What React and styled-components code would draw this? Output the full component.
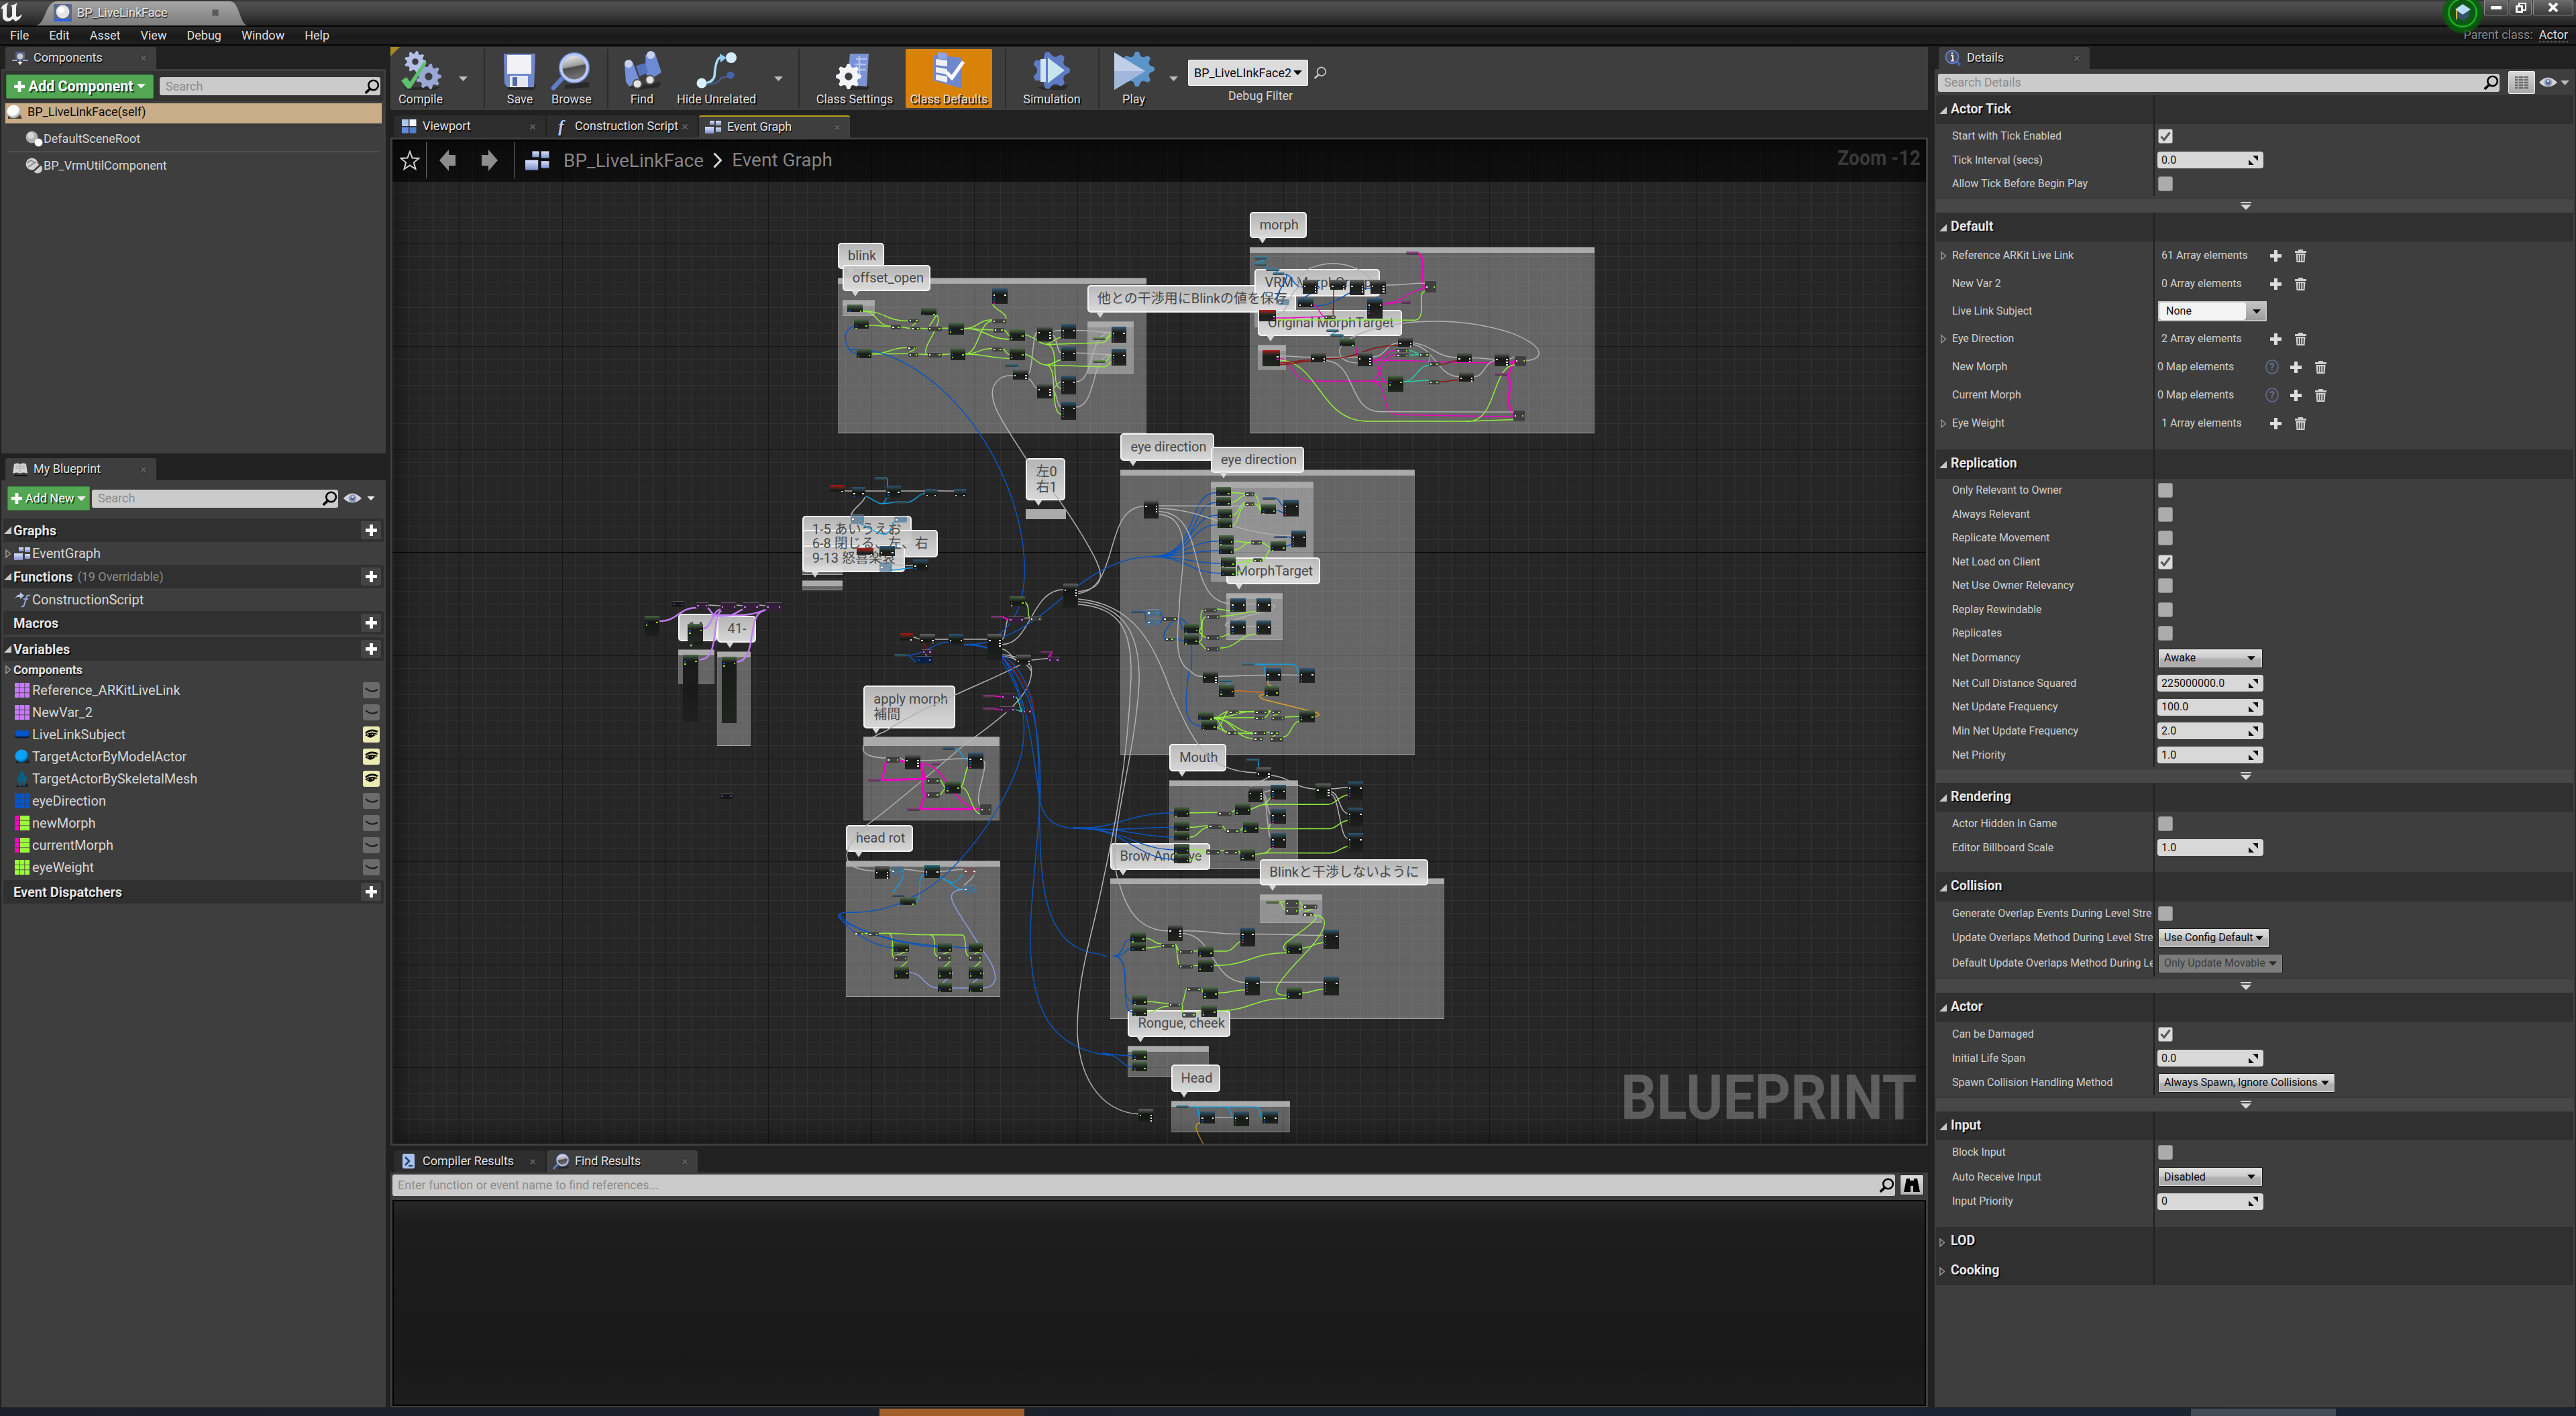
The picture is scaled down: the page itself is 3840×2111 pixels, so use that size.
import React from "react";
import styled, { createGlobalStyle, css } from "styled-components";

const Global = createGlobalStyle`
  * { box-sizing: border-box; }
  html, body { margin: 0; background: #212121; }
  body { font-family: Roboto, "Noto Sans CJK JP", sans-serif; font-size: 18px; line-height: 1; color: #dcdcdc; overflow: hidden; }
`;

/* ───────── window frame ───────── */
const Window = styled.div`
  width: 3840px; height: 2111px; display: flex; flex-direction: column; background: #212121;
`;
const TitleBar = styled.header`
  height: 38px; display: flex; align-items: flex-start;
  background: linear-gradient(#2e2e2e 0, #4f4f4f 3px, #464646 40%, #212121 100%);
`;
const LogoBox = styled.div`width: 35px; height: 38px; flex: none;`;
const DocTab = styled.div`position: relative; width: 334px; height: 38px; display: flex; align-items: center; padding: 0 29px 0 45px;`;
const DocTabShape = styled.svg`position: absolute; left: 0; top: 0; z-index: 0;`;
const DocTabText = styled.span`position: relative; margin-left: 8px; color: #e6e6e6; text-shadow: 1px 2px 1px #222; flex: 1;`;
const DocTabIcon = styled.span`position: relative; display: flex;`;
const TitleFill = styled.div`flex: 1;`;
const Grad = styled.div`
  width: 62px; height: 52px; margin: 0 1px 0 0; position: relative; z-index: 2; display: flex; justify-content: center; padding-top: 5px;
  background: radial-gradient(ellipse 31px 31px at 31px 19px, #0e5a14 0 62%, #15c41f 64% 67%, #0b610f 72%, rgba(8,90,12,.7) 96%, transparent 100%);
`;
const WinButtons = styled.div`display: flex; gap: 2px; padding-right: 4px;`;
const WinButton = styled.div`
  width: ${(p) => p.$w}px; height: 23px; display: flex; align-items: center; justify-content: center;
  background: linear-gradient(#6d6d6d, #3b3b3b); border: 1px solid #8a8a8a; border-top: 0; border-radius: 0 0 3px 3px;
`;
const MenuBar = styled.nav`
  height: 30px; display: flex; align-items: center; padding-left: 15px; gap: 30px;
  border-top: 2px solid #050505; border-bottom: 2px solid #050505;
  background: linear-gradient(#262626, #191919 60%, #202020); color: #dedede;
`;
const MenuItem = styled.span``;
const ParentClass = styled.div`margin-left: auto; padding-right: 12px; display: flex; gap: 9px; color: #8a8a8a; text-shadow: 1px 2px 0 #000;`;
const ParentLink = styled.span`color: #e2e2e2; border-bottom: 1px dotted #e2e2e2; padding-bottom: 1px;`;
const Body = styled.main`height: 2031px; display: flex; padding-top: 2px;`;
const TaskBar = styled.footer`height: 12px; display: flex; background: linear-gradient(90deg, #19202c, #1d2029 30%, #182532 70%, #1a2230);`;
const TaskChip = styled.div`height: 11px; margin-top: 1px; margin-left: ${(p) => p.$ml}px; width: ${(p) => p.$w}px; background: ${(p) => p.$c};`;

/* ───────── docking tabs and panels ───────── */
const Column = styled.section`width: ${(p) => p.$w}px; margin-left: ${(p) => p.$ml}px; display: flex; flex-direction: column; flex: none;`;
const TabStrip = styled.div`display: flex; height: 33px; margin: ${(p) => p.$mt || 0}px 0 0 6px; gap: 2px; flex: none;`;
const TabBox = styled.div`
  width: 225px; height: 33px; display: flex; align-items: center; padding-left: 9px; color: #e0e0e0; border-radius: 3px 3px 0 0;
  background: ${(p) => (p.$active ? "#3e3e3e" : "#2d2d2d")};
  ${(p) => p.$marked && css`border-top: 2px solid #b8a01c;`}
`;
const TabIcon = styled.span`width: 25px; display: flex; justify-content: center; flex: none;`;
const TabLabel = styled.span`margin-left: 8px; width: 156px; padding: 4px 0 5px; white-space: nowrap; overflow: hidden; text-shadow: 1px 2px 1px #000;`;
const TabClose = styled.span`display: flex; margin-left: auto; margin-right: 14px; position: relative;`;
const Panel = styled.div`
  background: #3e3e3e; height: ${(p) => p.$h}px; display: flex; flex-direction: column; flex: none;
`;

const Cross = ({ c = "#5e5e5e" }) => (
  <TabClose><svg width="10" height="10" viewBox="0 0 10 10"><rect width="10" height="10" rx="2" fill="#222" opacity=".35" /><path d="M1.500 1.500L8.500 8.500M8.500 1.500L1.500 8.500" stroke={c} strokeWidth="2.200" /></svg></TabClose>
);
const Tab = ({ icon, label, active = true, marked }) => (
  <TabBox $active={active} $marked={marked}>
    <TabIcon>{icon}</TabIcon>
    <TabLabel>{label}</TabLabel>
    <Cross />
  </TabBox>
);

const SearchBox = styled.div`
  height: ${(p) => p.$h || 27}px; background: #cbcbcb; border-radius: 3px; display: flex; align-items: center; justify-content: space-between;
  padding: 0 1px 0 9px; color: #8b8b8b; flex: 1;
`;
const GreenButton = styled.div`
  width: ${(p) => p.$w}px; height: 36px; display: flex; align-items: center; justify-content: center; gap: 5px; color: #fff;
  font-weight: ${(p) => (p.$bold ? 700 : 400)}; font-size: ${(p) => (p.$bold ? 21.5 : 18)}px; white-space: nowrap;
  background: #53a653; border: 1px solid #3f8b3f; border-radius: 2px; text-shadow: 2px 2px 0 #1d3f1d;
`;

/* ───────── icons ───────── */
const Mag = ({ s = 22, c = "#000", w = 2.6 }) => (
  <svg width={s} height={s} viewBox="0 0 22 22">
    <circle cx="12.6" cy="9" r="7.3" fill="none" stroke={c} strokeWidth={w} />
    <path d="M7.6 14.4L1.8 19.8" stroke={c} strokeWidth={w + 1.2} strokeLinecap="round" />
  </svg>
);
const Caret = ({ c = "#eee", w = 13, h = 7 }) => (
  <svg width={w} height={h} viewBox="0 0 13 7"><path d="M0 0H13L6.5 7Z" fill={c} /></svg>
);
const Plus = ({ s = 17, c = "#fff" }) => (
  <svg width={s} height={s} viewBox="0 0 17 17"><path d="M6 0H11V6H17V11H11V17H6V11H0V6H6Z" fill={c} /></svg>
);
const Sphere = ({ s = 24, id = "sp", from = "#fff", to = "#8d8d8d" }) => (
  <svg width={s} height={s} viewBox="0 0 24 24">
    <defs><radialGradient id={id} cx="40%" cy="32%" r="70%"><stop offset="0" stopColor={from} /><stop offset=".6" stopColor={from} /><stop offset="1" stopColor={to} /></radialGradient></defs>
    <path d="M3 18L21 16L24 22H3Z" fill="#151515" opacity=".7" />
    <circle cx="11.5" cy="11.5" r="10" fill={`url(#${id})`} />
  </svg>
);
const SceneRootIcon = () => (
  <svg width="26" height="24" viewBox="0 0 26 24"><circle cx="9.5" cy="9.5" r="9" fill="#b0b0b0" /><circle cx="8" cy="7" r="5" fill="#d6d6d6" /><circle cx="19.500" cy="17.500" r="6" fill="#fff" /></svg>
);
const VrmIcon = () => (
  <svg width="26" height="24" viewBox="0 0 26 24"><circle cx="9.500" cy="9.500" r="9" fill="#d2d2d2" /><path d="M2 8L8 4L14 8M4 14L16 6" stroke="#8a8a8a" strokeWidth="2" fill="none" /><circle cx="18" cy="16.500" r="7" fill="#cfcfcf" /><path d="M11 21L24 9" stroke="#3e3e3e" strokeWidth="2.500" /></svg>
);
const ComponentsIcon = () => (
  <svg width="24" height="22" viewBox="0 0 24 22"><rect x="5" y="1" width="14" height="13" rx="2" fill="#55648a" /><circle cx="12" cy="8" r="4.500" fill="#c9c9c9" /><path d="M0 14H8M16 14H24M12 14V20" stroke="#9aa6c4" strokeWidth="2" /><path d="M8 16H16L12 21Z" fill="#e8e8e8" /></svg>
);
const BookIcon = () => (
  <svg width="24" height="22" viewBox="0 0 24 22"><path d="M2 19H23L22 21H4Z" fill="#141414" /><path d="M1 17L3 3Q8 0 12 3Q17 0 21 3L23 17Q17 14 12 17Q7 14 1 17Z" fill="#d4d4d4" /><path d="M12 3V17M5 6H10M5 9H10M14 6H19M14 9H19" stroke="#9a9a9a" /></svg>
);
const GraphIcon = ({ w = 25, h = 21 }) => (
  <svg width={w} height={h} viewBox="0 0 25 21"><defs><linearGradient id="gi" x2="0" y2="1"><stop offset="0" stopColor="#dce4ff" /><stop offset="1" stopColor="#7e8fc8" /></linearGradient></defs>
    <rect x="7" y="1" width="7" height="6" fill="url(#gi)" /><rect x="16" y="1" width="8" height="7" fill="url(#gi)" /><rect x="0" y="10" width="13" height="10" fill="url(#gi)" /><rect x="16" y="11" width="8" height="7" fill="url(#gi)" /></svg>
);
const ViewportIcon = () => (
  <svg width="22" height="22" viewBox="0 0 22 22"><rect x="0" y="0" width="10" height="10" fill="#a9c7ee" /><rect x="11.500" y="0" width="10" height="10" fill="#f1f7ff" /><rect x="0" y="11.500" width="10" height="9" fill="#5f8edb" /><rect x="11.500" y="11.500" width="10" height="9" fill="#4f7fd0" /></svg>
);
const ScriptF = styled.span`font: italic bold ${(p) => p.$s || 25}px "Liberation Serif", serif; line-height: 22px; color: #b9c6f2; text-shadow: 1px 2px 1px #111;`;
const FnIcon = () => (
  <svg width="25" height="23" viewBox="0 0 25 23"><path d="M1 9Q5 3 9 3V0L15 5L9 10V7Q5 6 1 9Z" fill="#b4c2e8" /><path d="M24 5Q19 3 18 9L15 19Q14 22 11 21M14 10H21" fill="none" stroke="#93a3d2" strokeWidth="2.200" /></svg>
);
const InfoIcon = () => (
  <svg width="25" height="25" viewBox="0 0 25 25"><path d="M17 17L23 23" stroke="#3f66b8" strokeWidth="4" /><circle cx="11" cy="11" r="9.500" fill="#4a4f5c" stroke="#5f80c8" strokeWidth="2" /><path d="M9 9H12V16M9 16.500H14" stroke="#e6e6e6" strokeWidth="2" fill="none" /><circle cx="11" cy="5.800" r="1.500" fill="#e6e6e6" /></svg>
);
const CompilerIcon = () => (
  <svg width="22" height="24" viewBox="0 0 22 24"><rect x="1" y="0" width="18" height="22" rx="2" fill="#a9c3ef" /><path d="M5 5L11 11L5 17M10 18H16" stroke="#23406f" strokeWidth="2.500" fill="none" /></svg>
);
const GlassIcon = ({ s = 25 }) => (
  <svg width={s} height={s} viewBox="0 0 60 60"><defs><linearGradient id="gl" x1="0" y1="0" x2=".2" y2="1"><stop offset="0" stopColor="#fff" /><stop offset=".5" stopColor="#9d9d9d" /><stop offset=".56" stopColor="#4c4c4c" /><stop offset="1" stopColor="#777" /></linearGradient></defs>
    <path d="M22 50L56 46L58 54L20 57Z" fill="#1c1c1c" opacity=".6" /><path d="M16 42L4 55" stroke="#5f7cc4" strokeWidth="7" strokeLinecap="round" /><circle cx="35" cy="25" r="20" fill="url(#gl)" stroke="#b8c8f4" strokeWidth="5" /><circle cx="35" cy="25" r="22.500" fill="none" stroke="#5b76bd" strokeWidth="1.500" /></svg>
);
const Eye = () => (
  <svg width="27" height="16" viewBox="0 0 27 16"><path d="M0 8Q13 -7 27 8Q13 21 0 8Z" fill="#d3d5da" /><circle cx="13.500" cy="8" r="6" fill="#8f9cbd" /><circle cx="13.500" cy="8" r="3" fill="#4d5f8c" /><circle cx="13.500" cy="6" r="1.500" fill="#e4e8f2" /></svg>
);
const Trash = () => (
  <svg width="17" height="19" viewBox="0 0 17 19"><path d="M0 2H5V0H12V2H17V5H0Z" fill="#cfcfcf" /><path d="M1.500 6H15.500L14.500 19H2.500Z" fill="#cfcfcf" /><path d="M5 8V17M8.500 8V17M12 8V17" stroke="#3e3e3e" strokeWidth="1.400" /></svg>
);
const Open = ({ s = 11 }) => <svg width={s} height={s} viewBox="0 0 11 11"><path d="M11 0V11H0Z" fill="#c8c8c8" /></svg>;
const Closed = () => <svg width="9" height="13" viewBox="0 0 9 13"><path d="M1 1L7.500 6.500L1 12Z" fill="none" stroke="#a0a0a0" strokeWidth="1.300" /></svg>;

const gearPath = (cx, cy, r, n) => {
  let d = "";
  for (let i = 0; i < n * 4; i++) {
    const a = ((i - 0.5) / (n * 4)) * Math.PI * 2;
    const q = i % 4 < 2 ? r : r * 0.76;
    d += `${i ? "L" : "M"}${(cx + q * Math.cos(a)).toFixed(1)} ${(cy + q * Math.sin(a)).toFixed(1)}`;
  }
  return d + "Z";
};
const Gear = ({ cx, cy, r, n = 8, fill, hole = "#3e3e3e" }) => (
  <g><path d={gearPath(cx, cy, r, n)} fill={fill} /><circle cx={cx} cy={cy} r={r * 0.3} fill={hole} /></g>
);
const BigIcon = ({ kind }) => (
  <svg width="62" height="60" viewBox="0 0 62 60">
    {kind === "compile" && <><path d="M6 54H60L52 58H10Z" fill="#1d1d1d" opacity=".6" /><Gear cx={23} cy={16} r={16} n={9} fill="#b4c0e6" /><Gear cx={43} cy={38} r={19} n={9} fill="#9aa8d6" /><path d="M2 44L10 39L15 46L36 16L40 18L16 56H11Z" fill="#5cc06c" /></>}
    {kind === "save" && <><path d="M10 52L56 50L52 58H14Z" fill="#1d1d1d" opacity=".6" /><path d="M7 4H54L52 54H12L8 48Z" fill="#7089cf" /><rect x="12" y="6" width="36" height="28" fill="#f2f2f6" /><rect x="16" y="37" width="27" height="17" fill="#e6e8f0" /><rect x="20" y="39" width="7" height="13" fill="#5068ae" /></>}
    {kind === "browse" && <GlassIcon s={60} />}
    {kind === "find" && <><path d="M12 54L60 46L56 54L24 58Z" fill="#1d1d1d" opacity=".6" /><path d="M5 20L17 16L28 46L12 53L7 46Z" fill="#7591da" /><path d="M36 6L50 2L60 32L44 42L37 34Z" fill="#6d8ad4" /><path d="M22 22L36 18L40 32L27 38Z" fill="#5672bd" /><circle cx="11" cy="19" r="6" fill="#c6d1ee" /><circle cx="44" cy="6" r="6" fill="#c6d1ee" /><circle cx="24" cy="49" r="6.500" fill="#e2e2e2" stroke="#555" strokeWidth="2" /><circle cx="43" cy="43" r="6.500" fill="#e2e2e2" stroke="#555" strokeWidth="2" /></>}
    {kind === "hide" && <><path d="M8 50Q26 52 30 40Q32 8 42 12" fill="none" stroke="#a8dcf6" strokeWidth="3.500" transform="translate(-2 -2)" /><path d="M36 4L46 10L37 17Z" fill="#8fd2f5" /><path d="M12 50Q34 50 38 40L48 38" fill="none" stroke="#46597f" strokeWidth="3" /><circle cx="9" cy="48" r="7.500" fill="#d9f0fd" /><circle cx="53" cy="10" r="8" fill="#d4edfb" /><circle cx="52" cy="36" r="5.500" fill="#4564a8" /></>}
    {kind === "settings" && <><path d="M20 54L54 52L50 58H24Z" fill="#1d1d1d" opacity=".6" /><path d="M24 4L52 4L49 53L20 50Z" fill="#7b93d6" /><path d="M33 12H49M32 20H48M32 28H48M38 8V38" stroke="#b4c4f0" strokeWidth="2.500" /><Gear cx={22} cy={38} r={19} n={8} fill="#f4f4f8" /></>}
    {kind === "defaults" && <><path d="M8 6L50 10L50 56L8 44Z" fill="#7088cb" /><path d="M14 2L28 3L27 12H14Z" fill="#8ea4de" /><path d="M11 12L28 14V23L11 21ZM11 24L28 27V35L11 32ZM11 35L28 38V47L11 43Z" fill="#eef0f6" /><path d="M27 32L35 40L52 16" fill="none" stroke="#fff" strokeWidth="5.500" /></>}
    {kind === "sim" && <><path d="M10 54L56 50L50 58H18Z" fill="#1d1d1d" opacity=".6" /><Gear cx={30} cy={29} r={28} n={7} fill="#5e7cc6" hole="#5e7cc6" /><rect x="14" y="12" width="8" height="34" fill="#cfe4ee" /><path d="M25 10L50 29L25 48Z" fill="#c8e4ec" /></>}
    {kind === "play" && <><Gear cx={36} cy={27} r={26} n={8} fill="#5c93c8" hole="#5c93c8" /><path d="M2 2L48 30L2 58Z" fill="#c0cee8" /><path d="M2 30L48 30L2 58Z" fill="#a2b6dc" /></>}
  </svg>
);

/* ───────── components panel ───────── */
const CompToolbar = styled.div`
  margin: 3px 3px 0; height: 45px; background: #323232; border-radius: 4px; display: flex; align-items: center; gap: 9px; padding: 0 5px 0 4px;
`;
const SelfRow = styled.div`margin: 3px 6px 0; height: 30px; background: #c9ad88; color: #0b0b0b; display: flex; align-items: center; gap: 8px; padding: 0 0 4px 1px;`;
const TreeRow = styled.div`
  margin: ${(p) => (p.$faint ? 2 : 0)}px 8px 0; height: 40px; padding-left: 28px; display: flex; align-items: center; gap: 1px;
  border-top: 1px solid ${(p) => (p.$faint ? "#262626" : "#6a6a6a")}; color: #d6d6d6;
`;

/* ───────── my blueprint panel ───────── */
const BpToolbar = styled.div`height: 54px; display: flex; align-items: center; padding: 0 16px 0 9px; gap: 3px; flex: none; margin-bottom: 3px; & > svg { margin-left: 5px; }`;
const SectionHead = styled.div`
  margin: ${(p) => p.$mt || 0}px 3px 0; height: 35px; flex: none; background: #303030; border-radius: 3px 3px 0 0; display: flex; align-items: center; padding: 0 4px 0 1px;
  color: #e4e4e4; font-weight: 700; font-size: 20px; text-shadow: 2px 2px 0 #0a0a0a;
`;
const Twist = styled.span`width: 13px; display: flex; justify-content: ${(p) => (p.$c ? "center" : "flex-start")}; flex: none; margin-right: 1px;`;
const SectionNote = styled.span`margin-left: 7px; font-weight: 400; font-size: 18px; color: #8d8d8d; text-shadow: none;`;
const AddButton = styled.span`margin-left: auto; width: 30px; height: 27px; background: #444; border-radius: 2px; display: flex; align-items: center; justify-content: center;`;
const ItemRow = styled.div`
  height: ${(p) => p.$h || 33}px; flex: none; display: flex; align-items: center; padding: 0 9px 0 4px; font-size: 20px; color: #d6d6d6;
  ${(p) => p.$bold && css`font-weight: 700; font-size: 18px; color: #e2e2e2; text-shadow: 1px 2px 0 #111;`}
`;
const ItemIcon = styled.span`width: 26px; margin-right: 2px; display: flex; justify-content: center; flex: none;`;
const ItemEye = styled.span`
  margin-left: auto; width: 25px; height: 24px; border-radius: 3px; background: ${(p) => (p.$on ? "#ecebb2" : "#6b6b6b")};
  display: flex; align-items: center; justify-content: center;
`;

const ArrayIcon = ({ c }) => (
  <svg width="22" height="22" viewBox="0 0 22 22">{[0, 1, 2].map((i) => [0, 1, 2].map((j) => <rect key={`${i}${j}`} x={i * 7.6} y={j * 7.6} width="6.800" height="6.800" fill={c} />))}</svg>
);
const MapIcon = () => (
  <svg width="22" height="22" viewBox="0 0 22 22">{[0, 1, 2].map((j) => <g key={j}><rect x="0" y={j * 7.6} width="6.800" height="6.800" fill="#ff00c8" /><rect x="8" y={j * 7.6} width="14" height="6.800" fill="#9cff3c" /></g>)}</svg>
);
const PillIcon = () => <svg width="22" height="12" viewBox="0 0 22 12"><rect y="2" width="22" height="9.500" rx="4.500" fill="#0a1a36" /><rect width="22" height="9" rx="4.500" fill="#0556cc" /></svg>;
const BodyIcon = () => <svg width="18" height="24" viewBox="0 0 18 24"><path d="M0 22L18 19V24H0Z" fill="#111" opacity=".6" /><path d="M6 1H12V6L16 8L15 17H13V23H10V15H8V23H5V17H2L3 8L6 6Z" fill="#0b5f80" /></svg>;

const VARIABLES = [
  ["Reference_ARKitLiveLink", <ArrayIcon c="#c67bf7" />, 0],
  ["NewVar_2", <ArrayIcon c="#c67bf7" />, 0],
  ["LiveLinkSubject", <PillIcon />, 1],
  ["TargetActorByModelActor", <Sphere id="spb" from="#0aa2f4" to="#04395c" />, 1],
  ["TargetActorBySkeletalMesh", <BodyIcon />, 1],
  ["eyeDirection", <ArrayIcon c="#0556cc" />, 0],
  ["newMorph", <MapIcon />, 0],
  ["currentMorph", <MapIcon />, 0],
  ["eyeWeight", <ArrayIcon c="#9cff3c" />, 0],
];

const Section = ({ title, note, open, mt }) => (
  <SectionHead $mt={mt}>
    <Twist>{open && <Open />}</Twist>{title}{note && <SectionNote>{note}</SectionNote>}
    <AddButton><Plus /></AddButton>
  </SectionHead>
);

const LeftColumn = () => (
  <Column $w={573} $ml={2}>
    <TabStrip><Tab icon={<ComponentsIcon />} label="Components" /></TabStrip>
    <Panel $h={573}>
      <CompToolbar>
        <GreenButton $w={220} $bold><Plus s={16} />Add Component<Caret /></GreenButton>
        <SearchBox>Search<Mag /></SearchBox>
      </CompToolbar>
      <SelfRow><Sphere id="spa" />BP_LiveLinkFace(self)</SelfRow>
      <TreeRow $faint><SceneRootIcon />DefaultSceneRoot</TreeRow>
      <TreeRow><VrmIcon />BP_VrmUtilComponent</TreeRow>
    </Panel>
    <TabStrip $mt={7}><Tab icon={<BookIcon />} label="My Blueprint" /></TabStrip>
    <Panel $h={1382}>
      <BpToolbar>
        <GreenButton $w={123}><Plus s={16} />Add New<Caret /></GreenButton>
        <SearchBox>Search<Mag /></SearchBox>
        <Eye /><Caret w={12} h={6} />
      </BpToolbar>
      <Section title="Graphs" open />
      <ItemRow $h={34}><Twist $c><Closed /></Twist><ItemIcon><GraphIcon /></ItemIcon>EventGraph</ItemRow>
      <Section title="Functions" note="(19 Overridable)" open />
      <ItemRow $h={34}><Twist /><ItemIcon><FnIcon /></ItemIcon>ConstructionScript</ItemRow>
      <Section title="Macros" />
      <Section title="Variables" open mt={4} />
      <ItemRow $h={27} $bold><Twist $c><Closed /></Twist>Components</ItemRow>
      {VARIABLES.map(([name, icon, on]) => (
        <ItemRow key={name}>
          <Twist /><ItemIcon>{icon}</ItemIcon>{name}
          <ItemEye $on={on}>
            {on ? <svg width="22" height="16" viewBox="0 0 22 16"><path d="M2 6Q10 -1 20 4" fill="none" stroke="#0d0d08" strokeWidth="2.600" /><path d="M1 9Q10 2 20 7Q17 9 15 10Q9 15 5 11Q3 10 1 9Z" fill="#0d0d08" /><path d="M4 9L7 8.500M15 8.500L18 8M16 12L20 10" stroke="#ecebb2" strokeWidth="1.200" /><circle cx="12" cy="8" r="1" fill="#ecebb2" /></svg>
              : <svg width="22" height="10" viewBox="0 0 22 10"><path d="M2 2Q11 10 20 4" fill="none" stroke="#1d1d1d" strokeWidth="2.200" /></svg>}
          </ItemEye>
        </ItemRow>
      ))}
      <Section title="Event Dispatchers" mt={3} />
    </Panel>
  </Column>
);

/* ───────── toolbar ───────── */
const Toolbar = styled.div`height: 94px; background: #3e3e3e; display: flex; flex: none; position: relative; border-radius: 2px;`;
const Corner = styled.svg`position: absolute; left: 0; top: 0;`;
const Tool = styled.div`
  width: ${(p) => p.$w}px; margin: 3px 0 3px ${(p) => p.$ml || 0}px; height: 88px; display: flex; flex-direction: column; align-items: center; padding-top: 3px; border-radius: 2px;
  background: ${(p) => (p.$on ? "#d9820a" : "none")}; white-space: nowrap; text-shadow: 2px 2px 1px #0a0a0a; color: #dedede;
`;
const ToolLabel = styled.span`margin-top: 3px;`;
const ToolArrow = styled.div`width: 36px; margin-left: ${(p) => p.$ml || 0}px; display: flex; justify-content: center; padding-top: 44px;`;
const ToolSep = styled.div`width: 2px; margin: 3px 0 3px ${(p) => p.$ml}px; background: #2a2a2a;`;
const DebugCol = styled.div`margin-left: 4px; padding-top: 19px; display: flex; flex-direction: column;`;
const DebugRow = styled.div`display: flex; align-items: center; gap: 9px;`;
const DebugCombo = styled.div`width: 179px; height: 39px; background: #dcdcdc; border: 1px solid #f4f4f4; color: #0a0a0a; display: flex; align-items: center; justify-content: center; gap: 3px; border-radius: 2px;`;
const DebugLabel = styled.span`margin: 6px 0 0 60px; color: #d6d6d6;`;

const MainToolbar = () => (
  <Toolbar>
    <Corner width="14" height="14"><path d="M0 0H14L0 14Z" fill="#a88b1f" /></Corner>
    <Tool $w={90}><BigIcon kind="compile" /><ToolLabel>Compile</ToolLabel></Tool>
    <ToolArrow><Caret c="#bdbdbd" /></ToolArrow>
    <ToolSep $ml={13} />
    <Tool $w={78} $ml={13}><BigIcon kind="save" /><ToolLabel>Save</ToolLabel></Tool>
    <Tool $w={76}><BigIcon kind="browse" /><ToolLabel>Browse</ToolLabel></Tool>
    <ToolSep $ml={15} />
    <Tool $w={78} $ml={11}><BigIcon kind="find" /><ToolLabel>Find</ToolLabel></Tool>
    <Tool $w={144}><BigIcon kind="hide" /><ToolLabel>Hide Unrelated</ToolLabel></Tool>
    <ToolArrow $ml={2}><Caret c="#bdbdbd" /></ToolArrow>
    <ToolSep $ml={12} />
    <Tool $w={144} $ml={10}><BigIcon kind="settings" /><ToolLabel>Class Settings</ToolLabel></Tool>
    <Tool $w={129} $ml={4} $on><BigIcon kind="defaults" /><ToolLabel>Class Defaults</ToolLabel></Tool>
    <ToolSep $ml={19} />
    <Tool $w={110} $ml={13}><BigIcon kind="sim" /><ToolLabel>Simulation</ToolLabel></Tool>
    <ToolSep $ml={14} />
    <Tool $w={76} $ml={13}><BigIcon kind="play" /><ToolLabel>Play</ToolLabel></Tool>
    <ToolArrow $ml={3}><Caret c="#bdbdbd" /></ToolArrow>
    <DebugCol>
      <DebugRow><DebugCombo>BP_LiveLInkFace2<Caret c="#000" /></DebugCombo><Mag s={19} c="#c4c4c4" w={2} /></DebugRow>
      <DebugLabel>Debug Filter</DebugLabel>
    </DebugCol>
  </Toolbar>
);

/* ───────── graph canvas ───────── */
const OX = 585, OY = 208, GW = 2286, GH = 1497;
/* Each cluster of the graph has its own origin and unit size. */
const A = [1200, 300, 0.38265, 0.44643];
const B = [1600, 300, 0.5102, 0.44643];
const C = [940, 700, 0.44643, 0.5102];
const D = [1600, 1000, 0.39541, 0.45918];
const Z = [0, 0, 1, 1];
const px = (r, x) => r[0] + x * r[2] - OX;
const py = (r, y) => r[1] + y * r[3] - OY;
const rect = (r, [x, y, w, h]) => ({ left: px(r, x), top: py(r, y), width: w * r[2], height: h * r[3] });

const GraphFrame = styled.div`height: 1503px; padding: 3px; background: #3e3e3e; flex: none;`;
const Canvas = styled.div`position: relative; width: ${GW}px; height: ${GH}px; overflow: hidden; background: #262626;`;
const Layer = styled.svg`position: absolute; left: 0; top: 0;`;
const Vignette = styled.div`position: absolute; inset: 0; box-shadow: inset 0 0 40px 6px rgba(0,0,0,.5); border-top: 2px solid #000;`;
const Comment = styled.div`
  position: absolute; border: 1px solid rgba(150,150,150,.25);
  background: linear-gradient(#aaa ${(p) => p.$head || 8}px, rgba(255,255,255,.29) ${(p) => p.$head || 8}px);
`;
const Bubble = styled.div`
  position: absolute; border: 2px solid #f4f4f4; border-radius: 5px; background: linear-gradient(rgba(190,190,190,.94), rgba(226,226,226,.94));
  &::after { content: ""; position: absolute; left: 11px; bottom: -10px; border: 6px solid transparent; border-bottom: 0; border-top: 9px solid #d8d8d8; }
`;
const BubbleText = styled.div`
  position: absolute; padding: 0 0 0 15px; display: flex; flex-direction: column; justify-content: center; font-size: 20px; line-height: 23px; white-space: nowrap; color: #484848;
`;
const HEADS = { g: "#4b6b45", b: "#2f5a7a", k: "#6b6b6b", r: "#b31616", t: "#0c6a70" };
const NodeBox = styled.div`
  position: absolute; display: flex; justify-content: space-between; padding: 9px 2px 1px; overflow: hidden;
  background: linear-gradient(${(p) => HEADS[p.$k]} 0, #1c221c 7px, #141614 9px, #1d201d 100%); opacity: .95;
`;
const SMALL = { s: "rgba(58,58,58,.88)", q: "rgba(70,110,140,.62)", n: "rgba(10,30,70,.95)", x: "rgba(120,80,80,.6)", m: "rgba(52,30,56,.92)", e: "rgba(24,22,26,.95)" };
const SmallBox = styled.div`
  position: absolute; border-radius: 2px; border-top: 1px solid rgba(180,180,180,.4);
  background: ${(p) => SMALL[p.$k]};
  display: flex; justify-content: space-between; align-items: center; padding: 0 2px;
`;
const PillBox = styled.div`position: absolute; border-radius: 2px; background: linear-gradient(${(p) => p.$c}, #333); opacity: .9;`;
const PinCol = styled.span`display: flex; flex-direction: column; gap: 2px;`;
const Pin = styled.i`width: 2.5px; height: 2px; flex: none; background: ${(p) => p.$c};`;

const COL = { w: "#b2b2b2", u: "#0a55c0", c: "#139fe0", l: "#92ef3c", m: "#f400c4", p: "#c07cf4", v: "#8f9ce2", d: "#8e1010", o: "#e2701c", y: "#dba52a", t: "#25cfa5", W: "#fff", h: "#3a5f6f", e: "#5d4570" };
const PINS = { g: ["ul", "l"], b: ["Wuhm", "W"], k: ["W", "WWW"], r: ["", "Wm"], t: ["Wc", "W"], s: ["W", "l"], q: ["W", "c"], n: ["u", "p"], x: ["W", "W"], m: ["p", "p"], e: ["e", "e"] };

/* kind letter → list of boxes, for every cluster */
const NODES = [
  [A, "g", [[165,346,60,24],[191,395,56,31],[452,357,59,24],[559,405,60,40],[201,492,59,32],[567,491,57,39],[797,427,59,38],[797,491,59,39],[797,1319,59,33]]],
  [A, "s", [[402,391,41,14],[335,411,38,16],[411,416,38,15],[478,417,54,17],[398,481,37,15],[402,503,40,16],[478,503,54,18],[729,391,54,16],[734,422,41,16],[729,487,41,15],[875,1385,48,18]]],
  [A, "b", [[729,291,60,51],[998,410,59,49],[998,486,59,48],[998,583,59,63],[998,669,59,62],[1194,418,57,54],[1194,492,57,56],[183,955,51,33],[317,950,56,39],[467,960,49,19],[579,960,49,19],[290,1151,60,34],[421,1196,60,39],[559,1445,59,38]]],
  [A, "k", [[904,417,60,52],[810,561,59,35],[904,606,60,52],[1006,1277,58,82],[447,1445,60,32],[711,1445,57,88],[823,1514,59,34]]],
  [A, "r", [[97,948,56,23],[201,1157,66,21],[371,1443,51,25]]],
  [A, "q", [[178,1046,51,31],[348,1053,48,19],[291,1204,50,34]]],
  [A, "m", [[793,1386,61,22],[454,1497,42,15],[946,1520,46,20]]],
  [A, "n", [[434,1519,60,24]]],
  [B, "k", [[670,261,44,49],[751,261,45,34],[808,261,43,52],[868,261,45,49],[694,503,45,35],[831,503,43,49],[949,453,43,34],[1122,503,43,35],[1231,507,43,45],[1127,568,44,34],[206,997,43,63]]],
  [B, "b", [[656,325,46,30],[858,325,46,67],[613,997,46,55],[637,1099,44,56],[459,1325,45,47],[535,1325,43,47],[459,1400,45,48],[535,1400,43,48]]],
  [B, "r", [[543,363,49,37],[553,497,50,54]]],
  [B, "g", [[778,459,45,24],[919,583,45,54],[417,954,43,30],[417,987,43,29],[421,1028,44,31],[421,1062,44,30],[425,1116,44,30],[425,1150,44,28],[431,1190,43,30],[431,1223,43,30],[549,1012,43,31],[576,1136,45,32],[323,1412,44,30],[323,1448,43,32]]],
  [B, "s", [[1027,265,34,39],[733,380,33,14],[943,491,38,13],[943,507,38,12],[1009,504,31,15],[1038,536,32,14],[1038,595,32,16],[1289,515,35,35],[1285,696,35,38],[502,971,28,15],[502,1003,28,15],[519,1132,31,15],[525,1191,28,15],[261,1387,42,15],[267,1455,28,15],[380,1357,40,17],[388,1379,40,17],[388,1448,40,18],[388,1486,40,18]]],
  [B, "q", [[597,327,35,21],[214,1363,38,23],[214,1394,38,24]]],
  [C, "e", [[138,385,42,17],[299,946,43,17]]],
  [C, "m", [[218,389,42,17],[300,389,54,25],[375,389,54,25],[451,389,54,25],[1236,655,50,16],[1231,692,54,18],[1308,701,33,12]]],
  [C, "g", [[47,428,49,60],[191,451,51,60],[175,541,51,196],[305,546,49,195],[1051,911,51,35],[900,1250,52,22],[880,1383,49,27],[1025,1383,49,27],[1128,1383,49,27],[880,1453,50,34],[1025,1453,49,34],[1128,1453,49,34],[1025,1500,49,27],[1128,1500,49,27]]],
  [C, "s", [[854,837,45,20],[987,899,45,20],[987,940,45,21],[1166,977,40,33],[746,1350,35,9],[793,1350,36,13],[880,1420,46,16],[1025,1416,46,20],[1128,1416,46,20]]],
  [C, "k", [[916,832,51,44],[815,1158,50,37]]],
  [C, "b", [[1127,828,51,47]]],
  [C, "q", [[870,1158,43,29],[1112,1213,43,25]]],
  [C, "t", [[981,1157,51,36]]],
  [C, "x", [[1112,1161,43,25]]],
  [D, "k", [[488,0,58,40],[690,314,56,32],[659,376,57,50],[914,366,57,51],[357,823,54,54],[245,1423,57,40]]],
  [D, "b", [[727,-8,57,40],[852,-8,58,48],[744,370,58,48],[744,449,58,47],[744,527,58,48],[1034,359,58,62],[1034,444,58,61],[1034,527,58,63],[630,834,55,62],[943,841,58,63],[647,992,56,61],[943,992,58,61],[478,1431,56,39],[604,1431,58,47],[713,1431,58,38]]],
  [D, "g", [[549,46,58,38],[721,51,55,31],[852,128,58,39],[470,136,58,22],[483,162,57,29],[379,443,59,31],[379,490,59,31],[379,523,59,29],[379,562,59,32],[379,595,59,30],[609,432,59,37],[640,490,58,38],[630,579,55,38],[215,850,58,31],[215,882,58,29],[470,894,58,37],[470,939,59,38],[804,882,58,38],[804,1028,58,38],[223,1055,55,30],[223,1091,55,30],[489,1028,57,38],[483,1086,58,37],[223,1232,55,31],[223,1269,55,31]]],
  [D, "s", [[585,126,40,14],[683,126,50,15],[745,126,39,14],[683,146,39,14],[745,146,52,16],[580,194,39,14],[679,194,50,15],[740,194,36,14],[679,214,36,14],[740,214,51,16],[545,455,52,17],[509,496,51,17],[575,511,52,17],[501,580,52,17],[570,580,52,17],[331,884,53,15],[397,903,56,17],[397,951,56,17],[428,1025,54,16],[358,1077,50,15],[410,1108,52,17],[799,742,51,25],[799,767,51,25],[865,758,56,16],[865,784,40,14]]],
];
const PILLS = [
  [A, "#2f6a80", [[780,544,50,10],[273,921,49,10],[348,1001,49,9],[348,1513,50,9]]],
  [A, "#6b9a44", [[1120,454,50,9],[1120,530,50,9]]],
  [A, "#a03a90", [[725,1385,45,9],[917,1502,50,8]]],
  [B, "#a03a90", [[972,169,38,11],[958,331,28,11],[1231,573,38,10]]],
  [B, "#3d8aa5", [[529,184,38,10],[529,207,38,9],[563,223,38,9],[583,238,34,9],[738,427,38,10],[751,444,38,9],[492,1540,38,9]]],
  [B, "#3f6fae", [[553,988,38,8],[587,1117,38,7],[168,1367,38,9]]],
  [C, "#2f6080", [[1042,812,40,8],[874,1242,43,7]]],
  [C, "#a03a90", [[1176,658,40,9],[1176,695,40,9],[793,903,43,8],[923,988,43,9],[1006,857,28,8]]],
  [D, "#2f7a9a", [[549,30,50,8],[653,286,50,8],[386,1412,50,7]]],
  [D, "#6b9a44", [[726,748,50,7]]],
];

const COMMENTS = [
  [A, [128,255,1202,519]], [A, [146,330,125,53]], [A, [1100,400,180,175]], [A, [861,1029,155,32], 15],
  [B, [515,153,1007,621]], [B, [530,347,82,75]], [B, [539,480,83,83]], [B, [138,896,860,953]], [B, [402,937,300,334]], [B, [446,1309,165,157]],
  [C, [573,280,134,28]], [C, [573,323,134,30]], [C, [159,526,121,100]], [C, [289,531,113,277]], [C, [778,780,454,246], 13], [C, [719,1142,515,398]],
  [D, [362,355,484,288]], [D, [138,673,1261,458]], [D, [702,726,236,92]], [D, [206,1217,306,100]], [D, [368,1395,448,104]],
];
const BUBBLES = [
  [A, [128,138,180,89], "blink"], [A, [146,212,342,89], "offset_open"],
  [B, [41,281,609,90], "他との干渉用にBlinkの値を保存"], [B, [138,776,273,90], "eye direction"], [B, [402,819,273,89], "eye direction"],
  [B, [515,35,167,89], "morph"], [B, [530,227,366,90], "VRM MorphGroup"], [B, [539,362,422,89], "Original MorphTarget"], [B, [446,1190,276,90], "MorphTarget"],
  [A, [861,859,152,141], "左0\n右1"],
  [C, [573,135,365,82], "1-5 あいうえお"], [C, [573,177,454,79], "6-8 閉じる、左、右"], [C, [573,221,344,78], "9-13 怒喜楽哀"],
  [C, [159,422,131,79], "14-"], [C, [290,427,128,78], "41-"], [C, [778,632,307,124], "apply morph\n補間"], [C, [719,1038,223,79], "head rot"],
  [D, [362,238,214,88], "Mouth"], [D, [138,559,377,87], "Brow And Eye"], [D, [702,611,635,87], "Blinkと干渉しないように"], [D, [206,1102,387,86], "Rongue, cheek"], [D, [368,1279,185,88], "Head"],
];

/* A wire is either a path or "x1 y1 x2 y2", which gets the usual horizontal tangents. */
const WIRES = [
  [A, "l", ["225 367 402 400", "225 367 336 418", "247 414 336 418", "373 420 411 424", "435 400 415 422", "449 424 480 426", "508 380 484 424", "M512 378C545 410 455 480 472 512", "532 424 560 424", "261 510 398 489", "261 510 404 509", "432 489 406 508", "442 510 480 512", "532 512 568 510", "619 425 730 396", "619 425 735 430", "619 425 797 461", "624 510 730 400", "624 510 730 492", "624 510 797 525", "M731 344C740 365 785 370 783 392", "775 430 797 448", "768 493 797 512", "M856 446C900 452 910 480 950 478L1160 472C1180 470 1180 450 1196 448", "M856 511C900 520 900 548 950 547L1165 553C1180 552 1185 538 1196 536", "M940 478C970 470 980 455 998 455", "M940 478C1000 480 950 620 998 626", "M940 547C970 545 975 532 998 530", "M940 547C990 550 950 705 998 712", "1170 458 1196 440", "1170 534 1196 514", "M858 1340C880 1350 860 1395 885 1398"]],
  [A, "w", ["869 578 904 437", "M869 592C890 600 890 625 906 625", "964 434 998 431", "964 447 998 507", "1057 431 1196 438", "1057 507 1196 512", "964 624 998 603", "964 632 998 688", "M1057 603C1130 600 1100 440 1196 437", "M1057 688C1140 680 1110 515 1196 512", "153 967 185 968", "234 968 318 968", "373 968 470 968", "516 967 582 968", "M232 980C245 1000 175 1030 180 1052", "342 1214 422 1217", "422 1456 448 1462", "507 1463 560 1463", "618 1463 712 1463", "768 1463 795 1392", "854 1392 878 1392", "M768 1480C880 1480 880 1297 1008 1297", "M768 1495C800 1500 810 1533 825 1533", "768 1515 850 1525", "882 1532 948 1527", "M768 1520C800 1520 870 1540 880 1568", "M1064 1304C1200 1290 1150 1220 1090 1130C1000 1000 930 930 860 858C780 750 700 660 740 610C760 585 780 582 812 582", "M1064 1310C1230 1290 1160 1025 1320 1018"]],
  [A, "c", ["M322 926C325 940 318 950 320 968", "M234 985C260 990 280 1010 300 1010L350 1006", "M300 1010C320 1005 315 985 322 983", "M397 1006C430 1005 440 975 470 975", "M215 1078C250 1085 270 1110 310 1112C340 1110 335 1070 355 1068", "330 1232 424 1224", "M824 548L824 560"]],
  [A, "u", ["M201 510C150 500 140 425 192 418", "M172 496C215 490 260 497 300 508C620 600 855 950 855 1230C855 1320 830 1400 757 1445", "M620 1480C680 1480 720 1475 770 1455C960 1400 1100 1190 1345 1187", "M398 1517C470 1515 500 1473 560 1472", "398 1517 436 1537", "M618 1480C700 1484 720 1490 770 1530", "M618 1482C700 1480 760 1490 800 1568"]],
  [A, "m", ["765 1388 797 1398", "960 1506 950 1526"], 2.5],
  [A, "d", ["453 1470 488 1502"]],
  [A, "p", ["460 1502 485 1535"]],
  [B, "u", ["M228 1187C370 1187 330 973 417 973", "M228 1187C370 1187 340 1008 417 1006", "M228 1187C350 1187 340 1048 421 1048", "M228 1187C350 1187 340 1081 421 1081", "M228 1187C330 1187 340 1135 425 1135", "M228 1187C330 1187 340 1167 425 1167", "M228 1187C330 1187 340 1209 431 1209", "M228 1187C330 1187 340 1242 431 1242", "591 992 617 1020", "592 1032 617 1040", "625 1120 641 1125", "621 1152 641 1145", "206 1372 216 1374", "206 1372 216 1408", "252 1374 264 1392", "252 1408 264 1394", "303 1392 325 1430", "M303 1392C340 1392 350 1450 345 1567", "M303 1392C290 1400 250 1450 270 1462", "295 1463 325 1467", "M620 244C640 244 640 286 672 288", "M620 244C640 250 570 330 604 338", "702 350 870 290", "714 285 660 340", "885 320 862 340"]],
  [B, "c", ["565 190 533 211", "565 212 567 226", "600 228 590 241", "770 432 755 447", "787 449 782 478", "M530 1546C570 1545 555 1552 562 1590", "M530 1546L640 1546C655 1548 650 1560 662 1580"]],
  [B, "m", ["592 390 738 386", "M702 346C720 355 720 384 738 386", "M904 344C960 340 990 290 1030 292", "M904 345L960 336", "M822 478C830 490 825 520 835 530", "M603 525C640 530 640 600 690 601L870 601", "874 531 945 498", "M870 601C900 600 890 515 945 513", "M874 531C900 540 890 608 922 608", "M870 601L920 604", "M870 601C930 610 890 713 950 713L1290 720", "874 531 1235 540", "1274 540 1292 532"]],
  [B, "m", ["M1008 175C1035 190 1005 285 1030 287", "M1266 578C1290 600 1255 690 1288 712", "1266 578 1292 534"], 3],
  [B, "l", ["M588 396L1000 397C1035 390 1000 300 1030 300", "M603 530C720 540 720 735 860 735L1150 735L1288 729", "M1150 735C1240 740 1220 550 1292 546", "461 973 504 976", "461 1006 504 982", "465 1048 504 1006", "465 1081 504 1012", "530 980 552 1034", "530 1010 552 1034", "469 1135 522 1141", "469 1165 522 1138", "549 1140 580 1157", "474 1209 528 1196", "474 1242 528 1200", "552 1198 580 1160", "M366 1434C385 1430 360 1365 384 1365", "M366 1434C385 1460 380 1456 392 1456", "M366 1470C390 1470 360 1387 392 1387", "M366 1470C385 1490 380 1495 392 1495", "418 1362 462 1368", "426 1386 540 1370", "426 1455 462 1445", "426 1492 540 1445"]],
  [B, "w", ["M672 290C655 290 640 260 690 225C740 200 800 200 850 240L880 270", "M592 380C640 370 620 300 672 280", "912 280 1030 274", "796 280 810 282", "603 517 700 521", "738 521 835 521", "M738 532C830 540 800 703 898 703L1288 704", "M835 540C760 540 770 480 800 465C900 390 1120 380 1280 440C1390 490 1370 530 1322 532", "874 520 952 473", "M990 472C1050 480 1060 523 1126 522", "M990 478C1060 490 1060 585 1130 586", "1165 523 1235 528", "1170 586 1235 532", "1272 527 1292 520", "249 1017 502 1018", "M249 1026C400 1030 450 1110 640 1118", "M249 1036C400 1040 320 1340 462 1344", "M249 1046C360 1050 310 1250 310 1350C300 1480 300 1540 340 1568", "500 1345 538 1345", "M574 1345C600 1350 590 1358 560 1370C450 1400 420 1420 462 1420", "500 1420 538 1420"]],
  [B, "d", ["603 540 696 530", "603 546 696 534", "738 526 950 482", "758 290 762 388", "1070 545 1126 532", "1070 603 1130 597"]],
  [B, "t", ["978 498 1012 508", "978 514 1012 512", "1038 512 1042 544", "964 602 1042 598", "964 602 1042 548"]],
  [C, "p", ["96 443 222 404", "M230 555C300 560 270 420 304 412", "M354 562C430 560 380 410 456 410", "240 465 304 408", "M256 402C280 425 270 428 300 428C350 432 360 408 380 408", "M270 424C400 430 420 420 456 408"], 2.5],
  [C, "w", ["256 396 304 398", "350 396 380 398", "424 396 456 398", "M1310 566C1200 620 1000 680 850 765C750 800 750 842 858 843", "M1332 560C1370 640 1250 720 1120 800C1000 890 850 1000 790 1038C700 1110 690 1170 818 1173", "896 843 918 850", "966 850 1130 845", "M1178 850C1200 860 1140 970 1170 982", "862 1173 872 1168", "910 1168 983 1174", "1030 1174 1114 1168", "M1150 1172C1150 1200 1100 1215 1116 1218"]],
  [C, "c", ["1082 816 1130 850", "M910 1185C910 1210 870 1230 878 1244", "M950 1264C980 1262 950 1185 983 1183", "M1032 1190C1100 1230 1090 1185 1114 1183", "M1032 1190C1080 1210 1080 1226 1114 1228"]],
  [C, "m", ["837 907 990 904", "M837 907C850 890 845 855 858 853", "896 850 918 854", "966 992 1170 993", "M966 858C985 870 970 900 990 905", "M966 858C985 880 960 950 990 951", "M966 992C980 970 975 955 990 952"], 3],
  [C, "m", ["M966 858C1060 860 1070 990 1170 993", "1216 662 1240 664", "1216 700 1236 702"], 2],
  [C, "l", ["1030 906 1054 930", "1030 950 1054 932", "1100 928 1132 866", "1102 928 1170 1006", "778 1355 796 1356", "M826 1356C870 1352 900 1358 960 1359L1110 1360", "M860 1355C890 1360 860 1428 884 1428", "M1000 1359C1030 1365 1000 1422 1028 1422", "M1110 1360C1125 1370 1110 1422 1132 1422", "920 1405 886 1424", "1065 1405 1030 1424", "1168 1405 1134 1424", "M924 1425C930 1450 880 1455 884 1475", "M1068 1425C1070 1450 1030 1455 1030 1475", "M1170 1425C1175 1450 1125 1455 1134 1475"]],
  [C, "v", ["930 1470 1028 1515", "1074 1515 1130 1515", "1072 1470 1040 1508", "1175 1470 1140 1508", "M1177 1515C1250 1510 1210 1440 1170 1400C1100 1290 1020 1230 1116 1227"]],
  [C, "t", ["1284 664 1312 708", "1284 702 1312 708"]],
  [C, "d", ["M1242 548C1300 600 1370 690 1341 706"]],
  [C, "u", ["M1240 545C1320 650 1340 790 1365 960C1380 1040 1440 1050 1521 1050", "M1238 540C1340 600 1365 700 1365 1000C1370 1200 1370 1400 1568 1416L1590 1423", "M1242 550C1340 640 1370 750 1368 950C1355 1150 1330 1300 1335 1400C1345 1550 1380 1690 1600 1712", "M1240 560C1300 640 1330 720 1305 830C1270 960 1100 1190 938 1250", "M900 1267C850 1285 800 1294 740 1294L715 1294C670 1300 700 1320 760 1340C900 1390 1000 1390 1130 1398", "M700 1297C710 1340 900 1390 1028 1396", "M695 1300C720 1350 820 1396 884 1398"]],
  [D, "w", ["M440 0C460 18 470 18 490 18", "546 18 730 14", "784 13 854 14", "M745 340C720 360 650 370 660 392", "M745 340C820 345 830 382 916 384", "716 394 746 389", "716 400 746 467", "716 410 746 544", "970 383 1036 379", "970 393 1036 463", "970 400 1036 545", "411 844 632 855", "685 855 944 859", "M411 853C530 855 520 1010 648 1012", "702 1011 944 1011", "534 1450 605 1450"]],
  [D, "l", ["528 153 588 132", "528 153 685 132", "528 153 685 152", "528 153 583 200", "528 153 680 220", "540 185 588 132", "540 185 583 200", "528 155 680 200", "622 132 685 134", "615 202 680 204", "733 130 750 132", "780 132 748 152", "720 152 748 130", "797 150 854 148", "728 200 745 202", "770 202 744 220", "790 215 854 164", "438 461 546 460", "597 458 612 452", "M668 450C700 440 700 434 730 434L960 434C990 434 1000 405 1036 403", "438 508 512 503", "438 540 512 508", "560 504 578 518", "626 519 644 508", "M698 510C720 512 730 513 750 513L965 513C1000 510 1000 488 1036 486", "438 581 504 583", "438 614 504 588", "552 583 572 584", "620 584 634 597", "M684 597C710 592 720 591 740 591L970 592C1000 590 1010 572 1036 570", "M715 434C735 430 735 412 748 412", "M735 513C742 505 740 492 750 490", "M720 592C740 588 740 575 750 570", "272 869 334 887", "272 900 334 895", "384 888 400 910", "384 888 400 958", "452 910 472 909", "M528 910L580 910C610 905 610 882 634 878", "452 957 472 957", "528 957 806 916", "862 900 944 883", "M905 793C950 800 830 860 800 885C785 900 795 908 806 908", "M905 793C990 795 930 870 860 930C750 1030 740 1055 808 1053", "862 1046 944 1034", "278 1074 360 1080", "278 1108 360 1089", "408 1082 430 1030", "408 1084 414 1114", "480 1030 492 1046", "546 1046 650 1036", "462 1110 486 1104", "540 1104 806 1064", "775 751 802 750", "775 751 802 778", "850 750 868 764", "850 780 868 768", "915 764 870 788"]],
  [D, "u", ["M0 508C150 520 200 462 380 461", "M48 513C200 520 250 508 380 508", "M48 513C200 510 250 540 380 540", "M48 513C200 520 250 581 380 581", "M48 513C200 520 250 614 380 612", "M150 926C200 920 180 872 218 872", "M150 926C200 930 190 902 218 902", "M150 926C230 930 165 1074 225 1074", "M155 926C230 930 165 1108 225 1108", "M110 1242C160 1246 180 1250 225 1250", "M110 1242C180 1246 180 1287 225 1287", "M437 0C420 100 410 180 486 180"]],
  [D, "c", ["M697 290L698 312", "592 34 582 46", "M434 1416L690 1416C710 1420 700 1455 716 1456", "M460 1416C480 1420 465 1455 482 1456", "M575 1416C600 1420 590 1450 606 1452"]],
  [D, "o", ["600 65 724 70"]],
  [D, "y", ["M735 34C730 50 745 45 750 52", "M728 77C690 75 695 90 740 98L900 132C940 138 930 150 902 148", "M482 1467C450 1470 460 1490 490 1536"]],
  [Z, "w", ["M1607 893C1690 900 1720 960 1745 1030C1780 1110 1800 1150 1873 1152", "M1607 897C1680 902 1700 950 1698 1020C1690 1150 1645 1260 1668 1315C1680 1360 1700 1387 1742 1388", "M1607 901C1670 905 1688 940 1686 1010C1680 1150 1660 1240 1645 1310C1625 1410 1606 1450 1606 1540C1610 1620 1650 1658 1698 1661"]],
];
const toPath = (r, d) => {
  let s = d;
  if (d[0] !== "M") {
    const [x1, y1, x2, y2] = d.split(" ").map(Number);
    const k = Math.max(Math.abs(x2 - x1) * 0.5, 8);
    s = `M${x1} ${y1}C${x1 + k} ${y1} ${x2 - k} ${y2} ${x2} ${y2}`;
  }
  return s.replace(/(-?[\d.]+) (-?[\d.]+)/g, (_, x, y) => `${px(r, +x).toFixed(1)} ${py(r, +y).toFixed(1)}`);
};

const lines = (start, step, max) => {
  const out = [];
  for (let i = Math.ceil(-start / step); start + i * step < max; i++) out.push([start + i * step, i]);
  return out;
};
const Grid = () => {
  const xs = lines(1759.5 - OX, 19.2, GW), ys = lines(823.3 - OY, 19.2, GH);
  const style = (i) => (i === 0 ? "#060606" : i % 8 === 0 ? "#161616" : "#323232");
  return (
    <Layer width={GW} height={GH} shapeRendering="crispEdges">
      {xs.filter((l) => l[1] % 8).map(([x, i]) => <path key={`x${i}`} d={`M${Math.round(x) + 0.5} 0V${GH}`} stroke={style(i)} />)}
      {ys.filter((l) => l[1] % 8).map(([y, i]) => <path key={`y${i}`} d={`M0 ${Math.round(y) + 0.5}H${GW}`} stroke={style(i)} />)}
      {xs.filter((l) => l[1] % 8 === 0).map(([x, i]) => <path key={`x${i}`} d={`M${Math.round(x) + 0.5} 0V${GH}`} stroke={style(i)} />)}
      {ys.filter((l) => l[1] % 8 === 0).map(([y, i]) => <path key={`y${i}`} d={`M0 ${Math.round(y) + 0.5}H${GW}`} stroke={style(i)} />)}
    </Layer>
  );
};

const Pins = ({ set }) => <PinCol>{[...set].map((c, i) => <Pin key={i} $c={COL[c]} />)}</PinCol>;

const Crumbs = styled.div`
  position: relative; height: 63px; display: flex; align-items: center; background: rgba(0,0,0,.62); color: #868686; font-size: 28px; padding: 0 0 3px 11px; border-top: 2px solid #000;
`;
const CrumbRule = styled.span`width: 1px; height: 54px; background: #6c6c6c; margin-left: ${(p) => p.$ml}px;`;
const CrumbIcon = styled.span`display: flex; margin-left: ${(p) => p.$ml}px;`;
const CrumbText = styled.span`margin-left: ${(p) => p.$ml}px; margin-top: ${(p) => p.$mt || 0}px; text-shadow: 1px 1px 0 #000;`;
const ZoomLabel = styled.div`position: absolute; right: 8px; top: 10px; font-size: 31px; font-weight: 700; color: #3a3a3a; transform: scaleX(.91); transform-origin: right; white-space: nowrap;`;
const CornerText = styled.div`position: absolute; right: 14px; bottom: 15px; font-size: 93px; line-height: 106px; font-weight: 700; color: rgba(255,255,255,.26); transform: scaleX(.9); transform-origin: right; white-space: nowrap;`;

const Graph = () => (
  <GraphFrame>
    <Canvas>
      <Grid />
      <CornerText>BLUEPRINT</CornerText>
      {COMMENTS.map(([r, b, head], i) => <Comment key={i} $head={head} style={rect(r, b)} />)}
      {BUBBLES.map(([r, b], i) => <Bubble key={i} style={rect(r, b)} />)}
      {BUBBLES.map(([r, b, text], i) => (
        <BubbleText key={i} style={rect(r, b)}>{text.split("\n").map((t) => <span key={t}>{t}</span>)}</BubbleText>
      ))}
      <Layer width={GW} height={GH} fill="none">
        {WIRES.map(([r, c, list, w = 1.5], i) => list.map((d, j) => <path key={`${i}-${j}`} d={toPath(r, d)} stroke={COL[c]} strokeWidth={w} />))}
      </Layer>
      {PILLS.map(([r, c, list], i) => list.map((b, j) => <PillBox key={`${i}-${j}`} $c={c} style={rect(r, b)} />))}
      {NODES.map(([r, k, list], i) => list.map((b, j) => {
        const Box = HEADS[k] ? NodeBox : SmallBox;
        return <Box key={`${i}-${j}`} $k={k} style={rect(r, b)}><Pins set={PINS[k][0]} /><Pins set={PINS[k][1]} /></Box>;
      }))}
      <Vignette />
      <Crumbs>
        <svg width="30" height="30" viewBox="0 0 30 30"><path d="M15 2L18.600 11.500L28.500 12L20.800 18.300L23.500 28L15 22.400L6.500 28L9.200 18.300L1.500 12L11.400 11.500Z" fill="none" stroke="#d4d4d4" strokeWidth="2" /></svg>
        <CrumbRule $ml={9} />
        <CrumbIcon $ml={18}><svg width="26" height="34" viewBox="0 0 26 34"><path d="M1 17L15 1V9H25V25H15V33Z" fill="#8c8c8c" /></svg></CrumbIcon>
        <CrumbIcon $ml={37}><svg width="26" height="34" viewBox="0 0 26 34"><path d="M25 17L11 1V9H1V25H11V33Z" fill="#8c8c8c" /></svg></CrumbIcon>
        <CrumbRule $ml={23} />
        <CrumbIcon $ml={16}><GraphIcon w={37} h={31} /></CrumbIcon>
        <CrumbText $ml={20} $mt={2}>BP_LiveLinkFace</CrumbText>
        <CrumbIcon $ml={14}><svg width="14" height="24" viewBox="0 0 14 24"><path d="M1.500 1.500L11.500 12L1.500 22.500" fill="none" stroke="#d8d8d8" strokeWidth="3" /></svg></CrumbIcon>
        <CrumbText $ml={14}>Event Graph</CrumbText>
        <ZoomLabel>Zoom -12</ZoomLabel>
      </Crumbs>
    </Canvas>
  </GraphFrame>
);

/* ───────── find results ───────── */
const FindRow = styled.div`display: flex; gap: 7px; margin: 3px 6px 0 3px; height: 32px;`;
const FindInput = styled(SearchBox)`height: 32px; font-size: 18px; padding: 0 1px 0 8px;`;
const FindButton = styled.div`width: 36px; height: 31px; border: 1px solid #1a1a1a; background: linear-gradient(#ddd, #b2b2b2); border-radius: 2px; display: flex; align-items: center; justify-content: center;`;
const FindList = styled.div`margin: 6px 3px 0; height: 307px; border: 2px solid #000; background: linear-gradient(#272727, #1d1d1d 10%, #191919 80%, #1d1d1d);`;

const CenterColumn = () => (
  <Column $w={2292} $ml={7}>
    <MainToolbar />
    <TabStrip $mt={8}>
      <Tab active={false} icon={<ViewportIcon />} label="Viewport" />
      <Tab active={false} icon={<ScriptF>f</ScriptF>} label="Construction Script" />
      <Tab marked icon={<GraphIcon />} label="Event Graph" />
    </TabStrip>
    <Graph />
    <TabStrip $mt={7}>
      <Tab active={false} icon={<CompilerIcon />} label="Compiler Results" />
      <Tab icon={<GlassIcon />} label="Find Results" />
    </TabStrip>
    <Panel $h={350}>
      <FindRow>
        <FindInput>Enter function or event name to find references...<Mag /></FindInput>
        <FindButton><svg width="24" height="20" viewBox="0 0 24 20"><path d="M4 0H9V3H15V0H20L24 20H14V11H10V20H0Z" fill="#000" /></svg></FindButton>
      </FindRow>
      <FindList />
    </Panel>
  </Column>
);

/* ───────── details ───────── */
const DetailSearch = styled.div`display: flex; align-items: center; padding: 0 9px 0 5px; height: 38px; flex: none; margin-top: 1px;`;
const GridToggle = styled.div`width: 40px; height: 34px; margin: 0 6px 0 13px; background: linear-gradient(#d8d8d8, #a9a9a9); border: 1px solid #eee; border-radius: 2px; display: flex; align-items: center; justify-content: center;`;
const CatHead = styled.div`
  height: 43.4px; margin: 0 3px 0 2px; display: flex; background: #303030; border-radius: 3px 3px 0 0; flex: none;
  color: #e6e6e6; font-weight: 700; font-size: 19.5px;
`;
const CatName = styled.div`width: 326px; padding: 0 0 2px 5px; display: flex; align-items: center; border-right: 2px solid #202020; text-shadow: 2px 2px 0 #0a0a0a;`;
const CatTwist = styled.span`width: 17px; display: flex; margin-top: 4px; flex: none;`;
const CatBody = styled.div`display: flex; flex-direction: column; padding-bottom: ${(p) => p.$pb || 0}px; flex: none; margin: 0 3px 0 2px; background: linear-gradient(#202020, #202020) 324px 0 / 2px 100% no-repeat;`;
const PropRow = styled.div`height: ${(p) => p.$h}px; display: flex; align-items: center; font-size: 16px; color: #cfcfcf; flex: none;`;
const PropTwist = styled.span`width: 24px; padding-left: 7px; flex: none; display: flex;`;
const PropName = styled.span`width: 299px; white-space: nowrap; overflow: hidden; padding: 4px 0; flex: none;`;
const PropValue = styled.span`margin-left: 7px; display: flex; align-items: center;`;
const CheckBox = styled.span`width: 22px; height: 22px; border-radius: 3px; background: ${(p) => (p.$on ? "#dcdcdc" : "#ababab")}; border: 1px solid #8d8d8d; margin-left: 1px; display: flex; align-items: center; justify-content: center;`;
const NumBox = styled.span`width: 158px; height: 25px; border-radius: 4px; background: #d8d8d8; color: #111; display: flex; align-items: center; justify-content: space-between; padding: 0 8px 0 6px;`;
const Combo = styled.span`
  width: ${(p) => p.$w}px; height: 29px; margin-left: 1px; border-radius: 2px; border: 1px solid #1c1c1c; display: flex; align-items: center; justify-content: space-between;
  padding: 0 ${(p) => (p.$wide ? 10 : 8)}px 0 8px; white-space: nowrap; color: ${(p) => (p.$off ? "#3c3c3c" : "#0b0b0b")};
  background: ${(p) => (p.$off ? "#7c7c7c" : "linear-gradient(#e0e0e0, #cdcdcd 45%, #b0b0b0 55%, #ababab)")}; box-shadow: inset 0 0 0 1px ${(p) => (p.$off ? "#8a8a8a" : "#dedede")};
`;
const NameCombo = styled.span`width: 162px; height: 30px; margin-left: 1px; display: flex; border: 2px solid #c4c4c4; background: linear-gradient(#c4c4c4, #9c9c9c); color: #0b0b0b; align-items: center;`;
const NameField = styled.span`width: 129px; height: 26px; background: #f3f3f3; border-radius: 4px; display: flex; align-items: center; padding-left: 10px; margin-right: 10px;`;
const ElemText = styled.span`width: ${(p) => p.$w}px; margin-left: ${(p) => p.$ml}px;`;
const Icons = styled.span`display: flex; align-items: center; gap: 20px;`;
const Help = styled.span`width: 20px; height: 22px; border-radius: 50%; border: 2px solid #5d6682; color: #69728e; font-weight: 700; font-size: 15px; display: flex; align-items: center; justify-content: center; margin-right: 17px;`;
const AdvBar = styled.div`margin: ${(p) => p.$mt}px 3px 0 2px; height: 21px; background: #474747; border-top: 1px solid #363636; display: flex; justify-content: center; align-items: center; flex: none; padding-right: 26px;`;

const Expand = () => <svg width="14" height="14" viewBox="0 0 14 14"><path d="M6 0H14V8ZM0 6L8 14H0Z" fill="#111" /></svg>;
const Check = ({ on }) => <CheckBox $on={on}>{on && <svg width="16" height="15" viewBox="0 0 16 15"><path d="M1.500 7.500L6 12.500L14.500 1.500" fill="none" stroke="#5a5a5a" strokeWidth="3.200" /></svg>}</CheckBox>;
const Num = ({ v }) => <NumBox>{v}<Expand /></NumBox>;
const Pick = ({ v, w = 156, off }) => <Combo $w={w} $off={off} $wide={w === 156}>{v}<Caret c={off ? "#2c2c2c" : "#0b0b0b"} w={12} h={7} /></Combo>;
const Arr = ({ n }) => <><ElemText $w={162} $ml={6}>{n} Array elements</ElemText><Icons><Plus s={17} c="#dedede" /><Trash /></Icons></>;
const MapEl = () => <><ElemText $w={161} $ml={0}>0 Map elements</ElemText><Help>?</Help><Icons><Plus s={17} c="#dedede" /><Trash /></Icons></>;

const CATEGORIES = [
  { name: "Actor Tick", adv: 4, rows: [["Start with Tick Enabled", <Check on />, 35.5], ["Tick Interval (secs)", <Num v="0.0" />, 35.5], ["Allow Tick Before Begin Play", <Check />, 35.5]] },
  { name: "Default", pb: 18, rows: [["Reference ARKit Live Link", <Arr n={61} />, 42, 1], ["New Var 2", <Arr n={0} />, 42], ["Live Link Subject", <NameCombo><NameField>None</NameField><Caret c="#0b0b0b" w={12} h={7} /></NameCombo>, 40], ["Eye Direction", <Arr n={2} />, 42, 1], ["New Morph", <MapEl />, 42], ["Current Morph", <MapEl />, 42], ["Eye Weight", <Arr n={1} />, 42, 1]] },
  { name: "Replication", adv: 2.5, rows: [["Only Relevant to Owner", <Check />, 35.5], ["Always Relevant", <Check />, 35.5], ["Replicate Movement", <Check />, 35.5], ["Net Load on Client", <Check on />, 35.5], ["Net Use Owner Relevancy", <Check />, 35.5], ["Replay Rewindable", <Check />, 35.5], ["Replicates", <Check />, 35.5], ["Net Dormancy", <Pick v="Awake" />, 38.5], ["Net Cull Distance Squared", <Num v="225000000.0" />, 35.7], ["Net Update Frequency", <Num v="100.0" />, 35.7], ["Min Net Update Frequency", <Num v="2.0" />, 35.7], ["Net Priority", <Num v="1.0" />, 35.7]] },
  { name: "Rendering", pb: 19, rows: [["Actor Hidden In Game", <Check />, 35.5], ["Editor Billboard Scale", <Num v="1.0" />, 35.5]] },
  { name: "Collision", adv: 3.5, rows: [["Generate Overlap Events During Level Stre", <Check />, 36], ["Update Overlaps Method During Level Stre", <Pick v="Use Config Default" w={166} />, 37], ["Default Update Overlaps Method During Le", <Pick v="Only Update Movable" w={186} off />, 39]] },
  { name: "Actor", adv: 3, rows: [["Can be Damaged", <Check on />, 36], ["Initial Life Span", <Num v="0.0" />, 36], ["Spawn Collision Handling Method", <Pick v="Always Spawn, Ignore Collisions" w={264} />, 37.5]] },
  { name: "Input", pb: 20, rows: [["Block Input", <Check />, 36], ["Auto Receive Input", <Pick v="Disabled" />, 37], ["Input Priority", <Num v="0" />, 36]] },
  { name: "LOD", shut: true, rows: [] },
  { name: "Cooking", shut: true, rows: [] },
];

const RightColumn = () => (
  <Column $w={955} $ml={10}>
    <TabStrip><Tab icon={<InfoIcon />} label="Details" /></TabStrip>
    <Panel $h={1995}>
      <DetailSearch>
        <SearchBox>Search Details<Mag /></SearchBox>
        <GridToggle><svg width="20" height="20" viewBox="0 0 20 20"><path d="M0 2H20M0 6H20M0 10H20M0 14H20M0 18H20" stroke="#6a6a6a" strokeWidth="2.400" /><path d="M5 0V20M13 0V20" stroke="#bdbdbd" strokeWidth="1.500" /></svg></GridToggle>
        <Eye /><svg width="18" height="7" viewBox="-5 0 18 7"><path d="M0 0H13L6.500 7Z" fill="#bcbcbc" /></svg>
      </DetailSearch>
      {CATEGORIES.map((c) => (
        <React.Fragment key={c.name}>
          <CatHead><CatName><CatTwist>{c.shut ? <Closed /> : <Open s={11} />}</CatTwist>{c.name}</CatName></CatHead>
          <CatBody $pb={c.pb}>
            {c.rows.map(([name, value, h, twist]) => (
              <PropRow key={name} $h={h}><PropTwist>{twist && <Closed />}</PropTwist><PropName>{name}</PropName><PropValue>{value}</PropValue></PropRow>
            ))}
          </CatBody>
          {c.adv && <AdvBar $mt={c.adv}><svg width="16" height="12" viewBox="0 0 16 12"><path d="M0 0H16V2H0ZM0 4H16L8 12Z" fill="#d6d6d6" /></svg></AdvBar>}
        </React.Fragment>
      ))}
    </Panel>
  </Column>
);

export default function App() {
  return (
    <Window>
      <Global />
      <TitleBar>
        <LogoBox><svg width="35" height="36" viewBox="0 0 35 36"><path d="M1 14Q3 6 13 4Q10 7 10 11V24Q11 27 14 27L18 24V12Q18 9 16 8Q22 7 26 4Q24 7 24 11V24Q26 27 33 21Q31 29 23 32L19 28Q16 32 11 32Q5 31 4 26V14Q4 11 1 14Z" fill="#efefef" /></svg></LogoBox>
        <DocTab>
          <DocTabShape width="334" height="38"><defs><linearGradient id="dt" x2="0" y2="1"><stop offset="0" stopColor="#a6a6a6" /><stop offset="1" stopColor="#7d7d7d" /></linearGradient></defs><path d="M18 38C34 36 32 2 50 2H308C322 2 322 36 334 38Z" fill="url(#dt)" /></DocTabShape>
          <DocTabIcon><svg width="27" height="26" viewBox="0 0 27 26"><rect width="27" height="26" fill="#5b6a8c" /><rect y="22.500" width="27" height="3.500" fill="#2a62e6" /><circle cx="13.500" cy="11.500" r="10" fill="#e4e4e4" /><circle cx="11" cy="9" r="5" fill="#fff" /></svg></DocTabIcon>
          <DocTabText>BP_LiveLinkFace</DocTabText>
          <Cross c="#555" />
        </DocTab>
        <TitleFill />
        <Grad><svg width="26" height="27" viewBox="0 0 26 27"><path d="M13 1L25 9L13 17L2 9Z" fill="#b9dcf6" /><path d="M5 12L13 17L22 12V20L13 26L5 20Z" fill="#37506f" /><path d="M4 10V24" stroke="#d8b23a" strokeWidth="2" /></svg></Grad>
        <WinButtons>
          <WinButton $w={36}><svg width="16" height="5"><path d="M0 0H16V5H0Z" fill="#fff" /></svg></WinButton>
          <WinButton $w={33}><svg width="16" height="15" viewBox="0 0 16 15"><path d="M5 4V1H15V11H11" fill="none" stroke="#fff" strokeWidth="2" /><rect x="1.500" y="5.500" width="8" height="8" fill="none" stroke="#fff" strokeWidth="3" /></svg></WinButton>
          <WinButton $w={60}><svg width="16" height="14" viewBox="0 0 16 14"><path d="M2 1L14 13M14 1L2 13" stroke="#fff" strokeWidth="4" /></svg></WinButton>
        </WinButtons>
      </TitleBar>
      <MenuBar>
        {["File", "Edit", "Asset", "View", "Debug", "Window", "Help"].map((m) => <MenuItem key={m}>{m}</MenuItem>)}
        <ParentClass>Parent class: <ParentLink>Actor</ParentLink></ParentClass>
      </MenuBar>
      <Body>
        <LeftColumn />
        <CenterColumn />
        <RightColumn />
      </Body>
      <TaskBar><TaskChip $ml={1311} $w={216} $c="#a3602b" /><TaskChip $ml={1739} $w={216} $c="#444c55" /></TaskBar>
    </Window>
  );
}
